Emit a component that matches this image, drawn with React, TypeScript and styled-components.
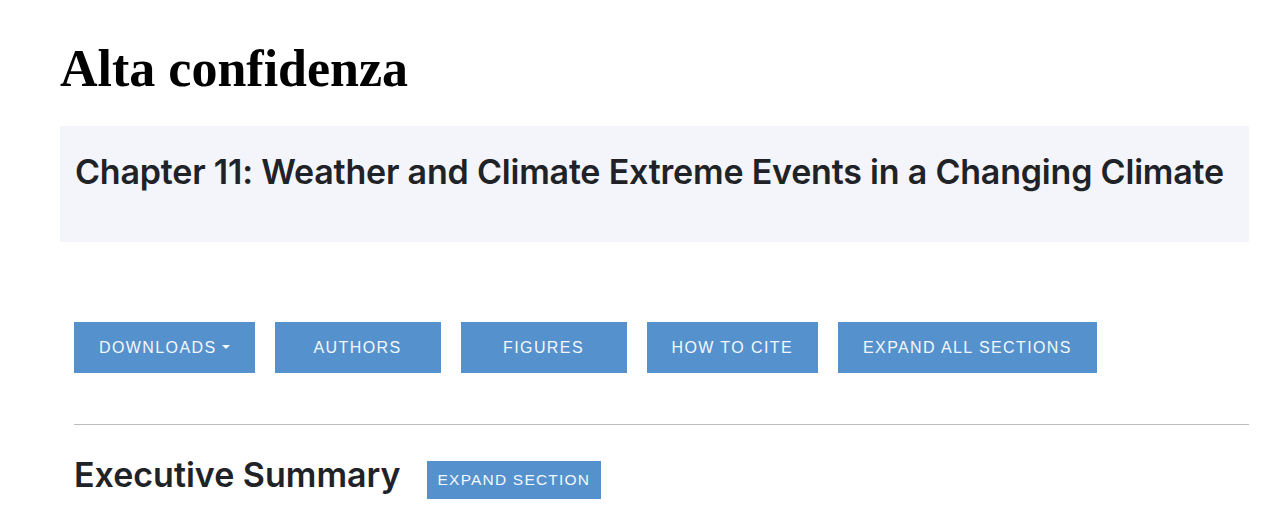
import React from "react";
import styled, { createGlobalStyle } from "styled-components";

const Global = createGlobalStyle`
  html, body { margin: 0; padding: 0; background: #ffffff; }
  * { box-sizing: border-box; }
`;

const Page = styled.div`
  padding: 38px 32px 0 60px;
  display: flex;
  flex-direction: column;
`;

const Title = styled.h1`
  margin: 0;
  font-family: "Liberation Serif", serif;
  font-weight: 700;
  font-size: 52px;
  line-height: 62px;
  color: #000;
`;

const Banner = styled.div`
  margin-top: 26px;
  background: #f3f5fa;
  height: 116px;
  display: flex;
  align-items: center;
  padding: 0 15px 26px;
`;

const ChapterHeading = styled.h2`
  margin: 0;
  font-family: "Inter", sans-serif;
  font-weight: 600;
  font-size: 34px;
  letter-spacing: -0.2px;
  color: #1f2327;
`;

const Body = styled.div`
  padding-left: 14px;
  display: flex;
  flex-direction: column;
`;

const Toolbar = styled.div`
  margin-top: 80px;
  display: flex;
  gap: 20px;
`;

const Button = styled.button<{ $small?: boolean }>`
  border: none;
  background: #5592cd;
  color: #f4f7fb;
  font-family: "Liberation Sans", Arial, sans-serif;
  font-size: ${(p) => (p.$small ? "15.5px" : "16px")};
  letter-spacing: ${(p) => (p.$small ? "1.2px" : "1.4px")};
  text-transform: uppercase;
  height: ${(p) => (p.$small ? "38px" : "51px")};
  min-width: ${(p) => (p.$small ? "0" : "166px")};
  padding: 0 ${(p) => (p.$small ? "11px" : "25px")};
  display: inline-flex;
  align-items: center;
  justify-content: center;
  gap: 5px;
  cursor: pointer;
`;

const Caret = styled.span`
  width: 0;
  height: 0;
  border-left: 4px solid transparent;
  border-right: 4px solid transparent;
  border-top: 4px solid #f4f7fb;
  margin-top: -2px;
`;

const Rule = styled.hr`
  margin: 51px 0 0;
  border: none;
  border-top: 1px solid #bdbdbd;
`;

const SectionRow = styled.div`
  margin-top: 29px;
  display: flex;
  align-items: center;
  gap: 26px;
`;

const SectionTitle = styled.h3`
  margin: 0 0 10px;
  font-family: "Inter", sans-serif;
  font-weight: 600;
  font-size: 34px;
  letter-spacing: 0;
  color: #1f2327;
`;

export default function App() {
  return (
    <>
      <Global />
      <Page>
        <Title>Alta confidenza</Title>
        <Banner>
          <ChapterHeading>
            Chapter 11: Weather and Climate Extreme Events in a Changing Climate
          </ChapterHeading>
        </Banner>
        <Body>
          <Toolbar>
            <Button>
              Downloads <Caret />
            </Button>
            <Button>Authors</Button>
            <Button>Figures</Button>
            <Button>How to cite</Button>
            <Button>Expand all sections</Button>
          </Toolbar>
          <Rule />
          <SectionRow>
            <SectionTitle>Executive Summary</SectionTitle>
            <Button $small>Expand section</Button>
          </SectionRow>
        </Body>
      </Page>
    </>
  );
}
